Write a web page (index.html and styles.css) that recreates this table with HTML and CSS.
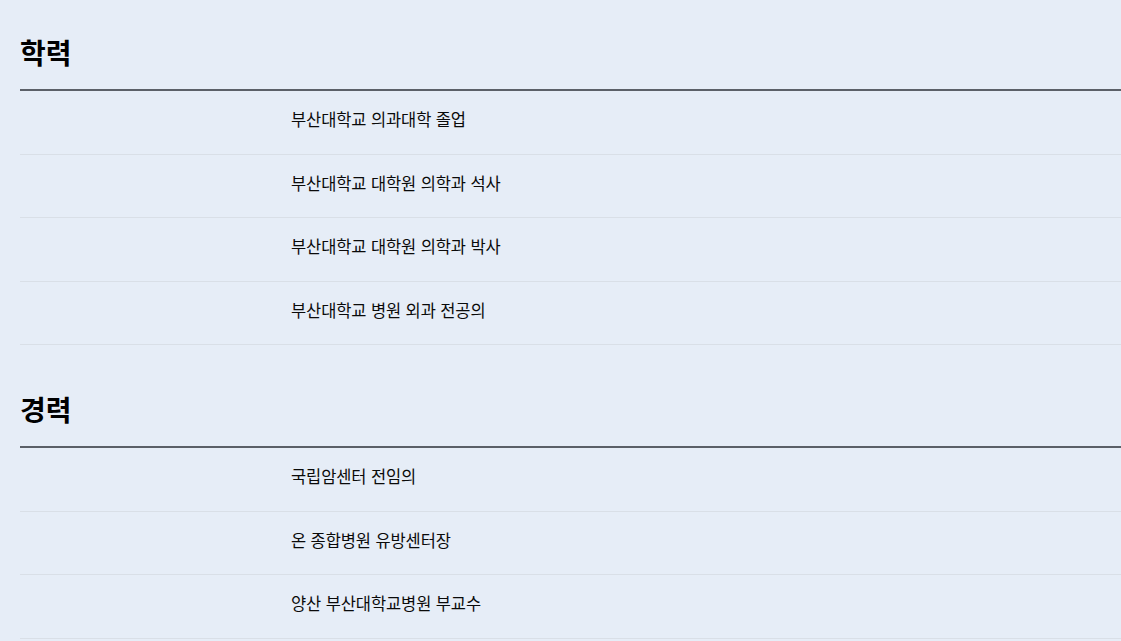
FILE: index.html
```html
<!DOCTYPE html>
<html lang="ko">
<head>
<meta charset="utf-8">
<link rel="stylesheet" href="styles.css">
</head>
<body>
<div class="page">
  <section class="section">
    <h2 class="section-title">학력</h2>
    <ul class="list">
      <li class="row"><span class="row-label"></span><span class="row-text">부산대학교 의과대학 졸업</span></li>
      <li class="row"><span class="row-label"></span><span class="row-text">부산대학교 대학원 의학과 석사</span></li>
      <li class="row"><span class="row-label"></span><span class="row-text">부산대학교 대학원 의학과 박사</span></li>
      <li class="row"><span class="row-label"></span><span class="row-text">부산대학교 병원 외과 전공의</span></li>
    </ul>
  </section>
  <section class="section">
    <h2 class="section-title">경력</h2>
    <ul class="list">
      <li class="row"><span class="row-label"></span><span class="row-text">국립암센터 전임의</span></li>
      <li class="row"><span class="row-label"></span><span class="row-text">온 종합병원 유방센터장</span></li>
      <li class="row"><span class="row-label"></span><span class="row-text">양산 부산대학교병원 부교수</span></li>
    </ul>
  </section>
</div>
</body>
</html>
```
FILE: styles.css
```css
html, body {
  margin: 0;
  padding: 0;
  background: #e6edf7;
}
body {
  font-family: "Noto Sans CJK KR", "Noto Sans", sans-serif;
  color: #111;
  overflow: hidden;
}
.page {
  padding-left: 20px;
  width: 1120px;
}
.section {
  padding-top: 34px;
}
.section + .section {
  padding-top: 46px;
}
.section-title {
  margin: 0;
  font-size: 28px;
  line-height: 36px;
  font-weight: 700;
  color: #000;
  padding-bottom: 19px;
  border-bottom: 2px solid #5b6068;
}
.list {
  list-style: none;
  margin: 0;
  padding: 0;
}
.row {
  display: flex;
  align-items: center;
  padding: 16.25px 0 22.25px;
  line-height: 24px;
  border-bottom: 1px solid #d9dfe7;
  font-size: 16.5px;
  letter-spacing: -0.1px;
}
.row-label {
  width: 271px;
  flex: none;
}
.row-text {
  color: #0a0a0a;
}
```
